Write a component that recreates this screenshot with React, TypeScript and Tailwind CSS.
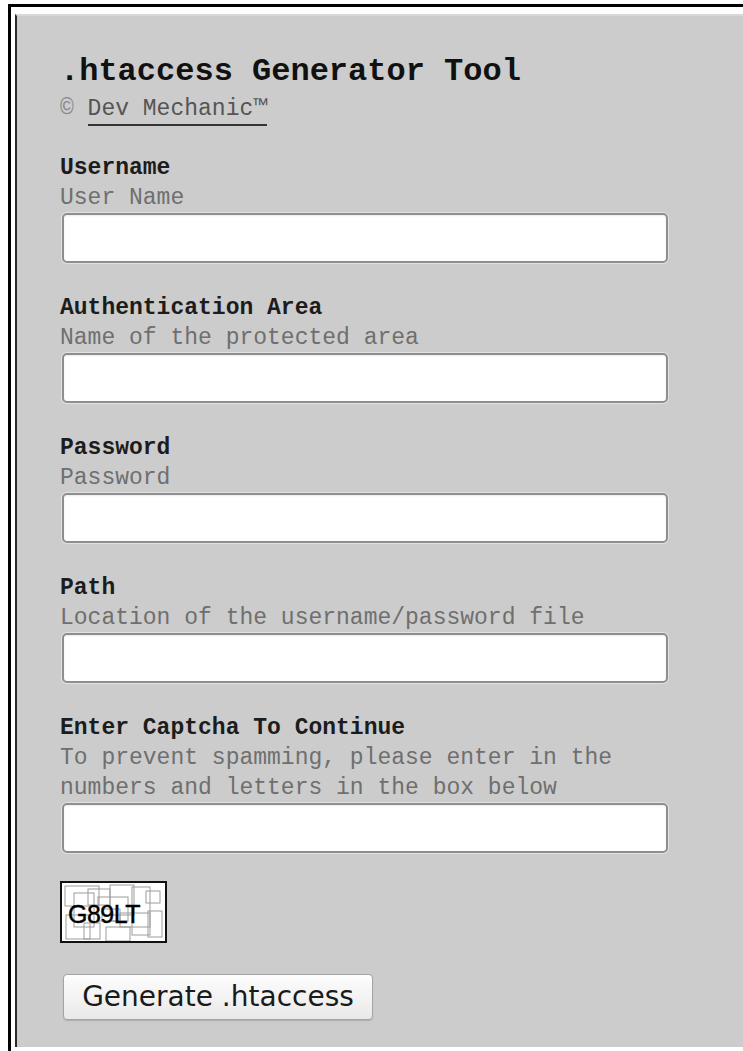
import type { ReactNode } from "react";

// Form fields for the generator
interface Field {
  label: string;
  hint: string;
  type?: string;
}

const fields: Field[] = [
  { label: "Username", hint: "User Name" },
  { label: "Authentication Area", hint: "Name of the protected area" },
  { label: "Password", hint: "Password", type: "password" },
  { label: "Path", hint: "Location of the username/password file" },
  {
    label: "Enter Captcha To Continue",
    hint: "To prevent spamming, please enter in the numbers and letters in the box below",
  },
];

function FormRow({ field, first }: { field: Field; first: boolean }) {
  return (
    <div className={first ? "mt-[27px]" : "mt-[30px]"}>
      <div className="text-[23px] leading-[30px] font-bold text-[#1c1c1c]">{field.label}</div>
      <div className="text-[23px] leading-[30px] text-[#6f6f6f]">{field.hint}</div>
      <input
        type={field.type ?? "text"}
        className="ml-[2px] block h-[50px] w-[606px] rounded-[5px] border-2 border-[#8e8e8e] bg-white shadow-[0_0_0_1px_#e2e2e2,inset_0_1px_2px_rgba(0,0,0,0.08)] outline-none"
      />
    </div>
  );
}

// Captcha picture: noisy grey boxes behind the code
function Captcha({ children }: { children: ReactNode }) {
  return (
    <div className="relative h-[62px] w-[107px] overflow-hidden border-2 border-[#111] bg-white">
      <svg className="absolute inset-0" width="103" height="58" viewBox="0 0 103 58">
        <g fill="none" stroke="#9c9c9c" strokeWidth="1">
          <rect x="3" y="3" width="34" height="20" />
          <rect x="12" y="10" width="20" height="34" />
          <rect x="26" y="6" width="22" height="16" />
          <rect x="36" y="14" width="30" height="24" />
          <rect x="48" y="2" width="24" height="30" />
          <rect x="70" y="4" width="18" height="48" />
          <rect x="84" y="8" width="14" height="12" />
          <rect x="4" y="32" width="24" height="24" />
          <rect x="44" y="44" width="24" height="14" />
          <rect x="58" y="30" width="30" height="14" />
          <rect x="22" y="40" width="16" height="16" />
          <rect x="86" y="28" width="14" height="26" />
          <rect x="40" y="26" width="18" height="12" />
        </g>
      </svg>
      <span className="absolute left-[6px] top-[16px] font-['Liberation_Sans',sans-serif] text-[25px] leading-[30px] tracking-[-0.5px] text-black [-webkit-text-stroke:0.4px_black]">
        {children}
      </span>
    </div>
  );
}

export default function App() {
  return (
    <div className="h-[1051px] overflow-hidden bg-white pl-2 pt-1 font-['Liberation_Mono',monospace]">
      <div className="h-[1047px] border-l-[3px] border-t-[3px] border-black pl-[4px] pt-[7px]">
        <div className="h-[1033px] border-l-2 border-t-2 border-l-[#2a2a2a] border-t-[#d8d8d8] bg-[#cccccc] pl-[43px] pt-[36px]">
          <h1 className="text-[32px] leading-[40px] font-bold text-[#111]">.htaccess Generator Tool</h1>
          <div className="mt-[2px] text-[23px] leading-[30px] text-[#666]">
            <span className="text-[#8a8a8a]">© </span>
            <a className="inline-block border-b-2 border-[#333] text-[#555]" href="#">
              Dev Mechanic™
            </a>
          </div>

          <form className="w-[620px]" onSubmit={(e) => e.preventDefault()}>
            {fields.map((f, i) => (
              <FormRow key={f.label} field={f} first={i === 0} />
            ))}

            <div className="mt-[28px]">
              <Captcha>G89LT</Captcha>
            </div>

            <button
              type="submit"
              className="ml-[3px] mt-[31px] h-[46px] w-[310px] rounded-[4px] border border-[#a5a5a5] bg-gradient-to-b from-[#fdfdfd] to-[#e9e9e9] font-['DejaVu_Sans',sans-serif] text-[28px] leading-[44px] text-[#1a1a1a] shadow-[0_1px_1px_rgba(0,0,0,0.15)]"
            >
              Generate .htaccess
            </button>
          </form>
        </div>
      </div>
    </div>
  );
}
